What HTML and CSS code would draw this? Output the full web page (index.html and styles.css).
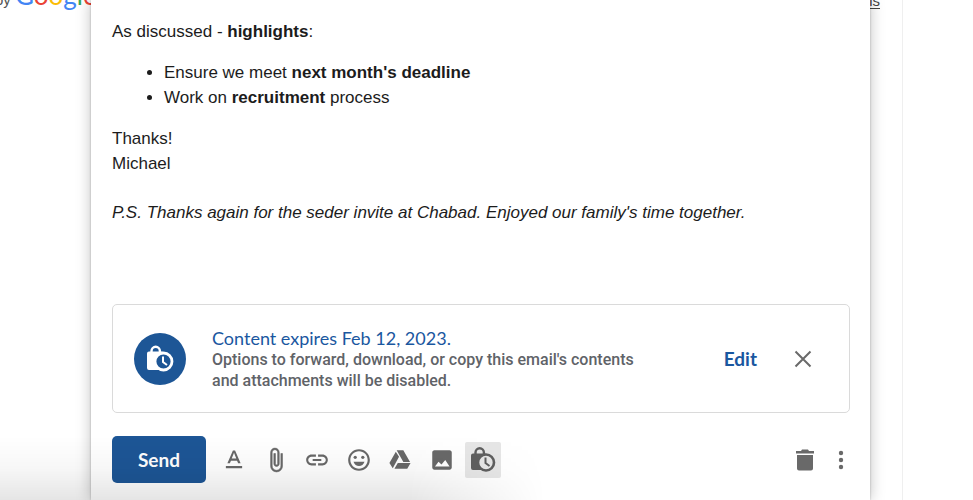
FILE: index.html
```
<!DOCTYPE html>
<html lang="en">
<head>
    <meta charset="UTF-8">
    <meta name="viewport" content="width=device-width, initial-scale=1.0">
    <title>Compose - Confidential mode</title>
    <link rel="stylesheet" href="styles.css">
</head>
<body>
    <!-- Inbox footer behind the compose window -->
    <div class="inbox">
        <p class="powered">by <span class="logo"><span class="blue">G</span><span class="red">o</span><span class="yellow">o</span><span class="blue">g</span><span class="green">l</span><span class="red">e</span></span></p>
        <a class="details" href="#">Details</a>
    </div>

    <main class="compose">
        <div class="message">
            <p>As discussed - <b>highlights</b>:</p>
            <ul>
                <li>Ensure we meet <b>next month's deadline</b></li>
                <li>Work on <b>recruitment</b> process</li>
            </ul>
            <p>Thanks!<br>Michael</p>
            <p class="ps"><i>P.S. Thanks again for the seder invite at Chabad. Enjoyed our family's time together.</i></p>
        </div>

        <!-- Confidential mode notice -->
        <section class="notice">
            <div class="badge">
                <svg class="badge-icon" viewBox="0 0 28 28" aria-hidden="true">
                    <path d="M5.500 8V6a4.200 4.200 0 0 1 8.400 0v2" fill="none" stroke="#fff" stroke-width="2.400"/>
                    <path d="M3 6.500h13.500l2 3V25H3a2 2 0 0 1-2-2V8.500a2 2 0 0 1 2-2z" fill="#fff"/>
                    <circle cx="17.500" cy="16.500" r="8.500" fill="#1d5696" stroke="#fff" stroke-width="2.800"/>
                    <path d="M17 11.500V17l4 3" fill="none" stroke="#fff" stroke-width="2"/>
                </svg>
            </div>
            <div class="notice-text">
                <h2>Content expires Feb 12, 2023.</h2>
                <p>Options to forward, download, or copy this email's contents and attachments will be disabled.</p>
            </div>
            <button class="edit" type="button">Edit</button>
            <button class="icon-button" type="button" aria-label="Turn off confidential mode">
                <svg class="icon" viewBox="0 0 26 26" fill="none" stroke="#6a6a6a" stroke-width="2"><path d="M5.500 5.500l15 15M20.500 5.500l-15 15"/></svg>
            </button>
        </section>

        <div class="toolbar">
            <button class="send" type="button">Send</button>
            <div class="tools">
                <button class="icon-button" type="button" aria-label="Formatting options">
                    <svg class="icon" viewBox="0 0 24 24"><path d="M4.500 17.500v2h15v-2h-15zm4.700-4.900h5.600l1 2.500h2.300L13 3.200h-2L5.900 15.100h2.300l1-2.500zM12 5.200l2.100 5.500H9.900L12 5.200z"/></svg>
                </button>
                <button class="icon-button" type="button" aria-label="Attach files">
                    <svg class="icon" viewBox="0 0 24 24" stroke="#696969" stroke-width=".5"><path d="M16.500 6v11.500c0 2.210-1.790 4-4 4s-4-1.790-4-4V5c0-1.380 1.120-2.500 2.500-2.500s2.500 1.120 2.500 2.500v10.500c0 .55-.45 1-1 1s-1-.45-1-1V6H10v9.500c0 1.380 1.120 2.500 2.500 2.500s2.500-1.120 2.500-2.500V5c0-2.210-1.790-4-4-4S7 2.790 7 5v12.500c0 3.040 2.460 5.500 5.500 5.500s5.500-2.460 5.500-5.500V6h-1.500z"/></svg>
                </button>
                <button class="icon-button" type="button" aria-label="Insert link">
                    <svg class="icon" viewBox="0 0 24 24"><path d="M3.900 12c0-1.710 1.390-3.100 3.100-3.100h4V7H7c-2.760 0-5 2.240-5 5s2.240 5 5 5h4v-1.900H7c-1.710 0-3.100-1.390-3.100-3.100zM8 13h8v-2H8v2zm9-6h-4v1.900h4c1.710 0 3.100 1.390 3.100 3.100s-1.390 3.100-3.100 3.100h-4V17h4c2.760 0 5-2.240 5-5s-2.240-5-5-5z"/></svg>
                </button>
                <button class="icon-button" type="button" aria-label="Insert emoji">
                    <svg class="icon" viewBox="0 0 24 24"><path d="M12 2C6.470 2 2 6.470 2 12s4.470 10 10 10 10-4.480 10-10S17.520 2 12 2zm0 18c-4.420 0-8-3.580-8-8s3.580-8 8-8 8 3.580 8 8-3.580 8-8 8z"/><circle cx="8.500" cy="9.500" r="1.500"/><circle cx="15.500" cy="9.500" r="1.500"/><path d="M6.900 13.500h10.200c-.8 2.400-2.800 4-5.100 4s-4.300-1.600-5.100-4z"/></svg>
                </button>
                <button class="icon-button" type="button" aria-label="Insert files using Drive">
                    <svg class="icon" viewBox="0 0 24 24"><path d="M7.710 3.500L1.150 15l3.430 5.500L11 8.700zM9.730 15L6.300 21h13.120l3.430-6zM22.280 14L15.420 2H8.580l6.850 12z" transform="translate(1.200 1.200) scale(.9)"/></svg>
                </button>
                <button class="icon-button" type="button" aria-label="Insert photo">
                    <svg class="icon" viewBox="0 0 24 24"><path d="M21 19V5c0-1.100-.9-2-2-2H5c-1.100 0-2 .9-2 2v14c0 1.100.9 2 2 2h14c1.100 0 2-.9 2-2zM5.500 18l3.300-4.500 2.700 2.700 3.500-4.200 4 6H5.500z"/></svg>
                </button>
                <button class="icon-button active" type="button" aria-label="Toggle confidential mode">
                    <svg class="icon" viewBox="0 0 26 26">
                        <path d="M5.500 8V5.500a4.200 4.200 0 0 1 8.400 0V8" fill="none" stroke="#5f5f5f" stroke-width="2.400"/>
                        <path d="M3 6.500h12.500V23H3a2 2 0 0 1-2-2V8.500a2 2 0 0 1 2-2z"/>
                        <circle cx="16" cy="15.500" r="8" fill="#e6e6e6" stroke="#5f5f5f" stroke-width="2.600"/>
                        <path d="M15.500 10.500V16l4 3" fill="none" stroke="#5f5f5f" stroke-width="2"/>
                    </svg>
                </button>
            </div>
            <div class="actions">
                <button class="icon-button" type="button" aria-label="Discard draft">
                    <svg class="icon" viewBox="0 0 26 26"><path d="M4 4h5l1-1.500h6L17 4h5v2.500H4zM5 8h16v13.500a2 2 0 0 1-2 2H7a2 2 0 0 1-2-2z"/></svg>
                </button>
                <button class="icon-button" type="button" aria-label="More options">
                    <svg class="icon" viewBox="0 0 26 26"><circle cx="13" cy="6" r="2.200"/><circle cx="13" cy="13" r="2.200"/><circle cx="13" cy="20" r="2.200"/></svg>
                </button>
            </div>
        </div>
    </main>
</body>
</html>
```
FILE: styles.css
```
* {
    box-sizing: border-box;
}
body {
    position: relative;
    display: grid;
    min-height: 100vh;
    margin: 0;
    overflow: hidden;
    background-color: #fff;
    font-family: "Liberation Sans", Arial, sans-serif;
}
/* shade rising from the bottom left corner */
body::after {
    content: "";
    position: absolute;
    left: 0;
    bottom: 0;
    width: 56%;
    height: 64px;
    background: linear-gradient(to top, rgba(0, 0, 0, 0.1), rgba(0, 0, 0, 0.03) 50%, transparent);
    mask-image: linear-gradient(to right, #000 75%, transparent);
    pointer-events: none;
}
p, h2, ul {
    margin: 0;
}
button {
    padding: 0;
    border: none;
    background: none;
    cursor: pointer;
}
.inbox, .compose {
    grid-area: 1 / 1;
}
.inbox {
    display: flex;
    justify-content: space-between;
    align-items: flex-start;
    margin-right: 70px;
    padding-right: 22px;
    border-right: 1px solid #efefef;
    color: #555;
}
.powered {
    margin-top: -20px;
    margin-left: -5px;
    font-size: 15px;
    line-height: 30px;
}
.logo {
    font-family: Lato, sans-serif;
    font-size: 26px;
}
.blue {
    color: #4285f4;
}
.red {
    color: #ea4335;
}
.yellow {
    color: #fbbc05;
}
.green {
    color: #34a853;
}
.details {
    margin-top: -8px;
    color: #444;
    font-size: 15px;
    line-height: 18px;
    text-underline-offset: 2px;
}
.compose {
    display: flex;
    flex-direction: column;
    z-index: 0;
    margin: 0 103px 0 91px;
    background-color: #fff;
    box-shadow: 0 0 14px rgba(0, 0, 0, 0.25), 0 0 2px rgba(0, 0, 0, 0.25);
}
.message {
    flex: 1;
    padding: 19px 21px 0;
    color: #1c1c1c;
    font-size: 17px;
    line-height: 25px;
}
.message ul {
    margin: 16px 0;
    padding-left: 52px;
}
.ps {
    margin-top: 24px;
}
.notice {
    display: flex;
    align-items: center;
    min-height: 109px;
    margin: 24px 20px 23px 21px;
    padding: 0 28px 0 21px;
    border: 1px solid #dadada;
    border-radius: 5px;
}
.badge {
    display: flex;
    flex-shrink: 0;
    align-items: center;
    justify-content: center;
    width: 52px;
    height: 52px;
    border-radius: 50%;
    background-color: #1d5696;
}
.badge-icon {
    width: 28px;
    height: 28px;
}
.notice-text {
    flex: 1;
    margin: 0 64px 0 26px;
}
.notice-text h2 {
    color: #1a57a0;
    font-family: Lato, sans-serif;
    font-size: 18px;
    font-weight: 400;
    line-height: 22px;
}
.notice-text p {
    color: #5f6368;
    font-family: Roboto, sans-serif;
    font-size: 16px;
    font-weight: 500;
    line-height: 21px;
}
.edit {
    margin-right: 28px;
    color: #1a57a0;
    font-family: Lato, sans-serif;
    font-size: 19px;
    font-weight: 700;
}
.icon-button {
    display: flex;
    align-items: center;
    justify-content: center;
    width: 36px;
    height: 36px;
    border-radius: 2px;
}
.icon {
    width: 26px;
    height: 26px;
    fill: #696969;
}
.active {
    background-color: #e6e6e6;
}
.active .icon {
    fill: #5f5f5f;
}
.toolbar {
    display: flex;
    align-items: center;
    padding: 0 11px 17px 21px;
}
.send {
    width: 94px;
    height: 47px;
    border-radius: 5px;
    background-color: #1d5696;
    color: #fff;
    font-family: Lato, sans-serif;
    font-size: 19px;
    font-weight: 700;
}
.tools {
    display: flex;
    justify-content: space-between;
    width: 285px;
    margin-left: 10px;
}
.actions {
    display: flex;
    margin-left: auto;
}
```
